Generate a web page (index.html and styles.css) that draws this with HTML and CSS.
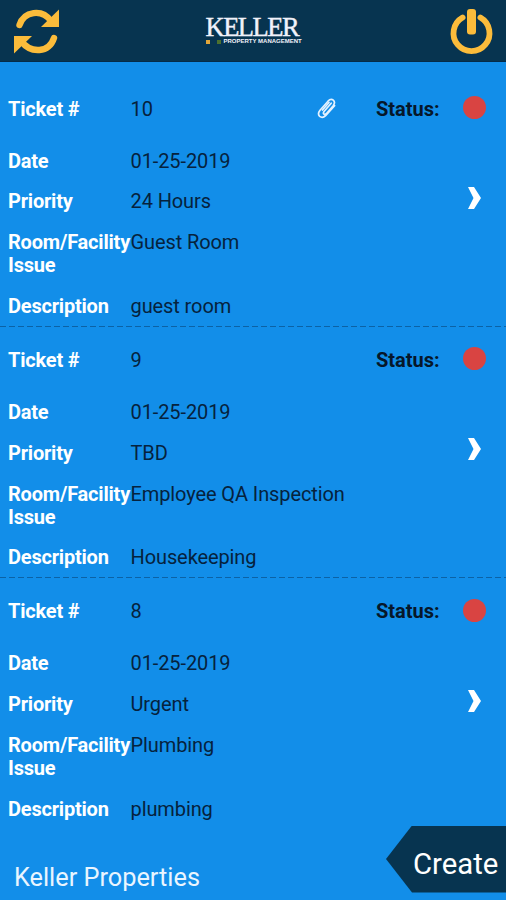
FILE: index.html
```html
<!DOCTYPE html>
<html lang="en">
<head>
<meta charset="utf-8">
<title>Keller Property Management</title>
<link rel="stylesheet" href="styles.css">
</head>
<body>
<header class="topbar">
  <svg class="refresh" width="48" height="46" viewBox="0 0 48 46" fill="none" stroke="#fbbc3b" stroke-width="6.400" stroke-linecap="round">
    <path d="M7.500 17C12 3 30 .5 39 13"/>
    <path d="M47 1.500V19H29Z" fill="#fbbc3b" stroke="none"/>
    <path d="M42 30C37 45 19 46 9 33"/>
    <path d="M2 45.500V28H20Z" fill="#fbbc3b" stroke="none"/>
  </svg>
  <div class="logo">
    <div class="logo-name">KELLER</div>
    <div class="logo-sub"><i class="sq gold"></i><i class="sq green"></i><span class="tagline">PROPERTY MANAGEMENT</span></div>
  </div>
  <svg class="power" width="46" height="48" viewBox="0 0 46 48" fill="none" stroke="#fbbc3b" stroke-linecap="round">
    <path d="M13.600 9.500A18 18 0 1 0 31.400 9.500" stroke-width="5.800"/>
    <rect x="18" y="1" width="9" height="25.500" rx="3" fill="#fbbc3b" stroke="none"/>
  </svg>
</header>
<main class="list">
  <section class="ticket">
    <dl class="fields">
      <dt class="first">Ticket #</dt><dd class="first">10</dd>
      <dt>Date</dt><dd>01-25-2019</dd>
      <dt>Priority</dt><dd>24 Hours</dd>
      <dt>Room/Facility<br>Issue</dt><dd>Guest Room</dd>
      <dt>Description</dt><dd>guest room</dd>
    </dl>
    <div class="side">
      <div class="status">
        <svg class="clip" width="22" height="24" viewBox="0 0 22 24" fill="none" stroke="#e4f2ff" stroke-width="1.700" stroke-linecap="round" stroke-linejoin="round"><path d="M15.200 7.200L8.200 15.200Q6.700 17.200 8 18.200Q9.300 19 10.700 17.300L17.200 9.800Q19.700 6.300 17.300 4.200Q14.800 2.200 12 5.200L4 14.200Q1.200 17.800 3.700 20.400Q6.600 22.600 9.600 19.600L18.600 9.600"/><path d="M13 6.500L6.500 14"/></svg>
        <span>Status:</span><i class="dot"></i>
      </div>
      <svg class="chevron" width="14" height="24" viewBox="0 0 14 24" fill="#fff"><path d="M0 1H6L13 12L6 23H0L5.500 12Z"/></svg>
    </div>
  </section>
  <section class="ticket">
    <dl class="fields">
      <dt class="first">Ticket #</dt><dd class="first">9</dd>
      <dt>Date</dt><dd>01-25-2019</dd>
      <dt>Priority</dt><dd>TBD</dd>
      <dt>Room/Facility<br>Issue</dt><dd>Employee QA Inspection</dd>
      <dt>Description</dt><dd>Housekeeping</dd>
    </dl>
    <div class="side">
      <div class="status"><span>Status:</span><i class="dot"></i></div>
      <svg class="chevron" width="14" height="24" viewBox="0 0 14 24" fill="#fff"><path d="M0 1H6L13 12L6 23H0L5.500 12Z"/></svg>
    </div>
  </section>
  <section class="ticket">
    <dl class="fields">
      <dt class="first">Ticket #</dt><dd class="first">8</dd>
      <dt>Date</dt><dd>01-25-2019</dd>
      <dt>Priority</dt><dd>Urgent</dd>
      <dt>Room/Facility<br>Issue</dt><dd>Plumbing</dd>
      <dt>Description</dt><dd>plumbing</dd>
    </dl>
    <div class="side">
      <div class="status"><span>Status:</span><i class="dot"></i></div>
      <svg class="chevron" width="14" height="24" viewBox="0 0 14 24" fill="#fff"><path d="M0 1H6L13 12L6 23H0L5.500 12Z"/></svg>
    </div>
  </section>
</main>
<footer class="footer">
  <div class="company">Keller Properties</div>
  <div class="create">Create</div>
</footer>
</body>
</html>
```
FILE: styles.css
```css
* { box-sizing: border-box; }
body {
  margin: 0;
  height: 900px;
  display: flex;
  flex-direction: column;
  overflow: hidden;
  background: #128ee9;
  font-family: Roboto, sans-serif;
  font-size: 20px;
  line-height: 23px;
}
.topbar {
  flex: none;
  height: 62px;
  display: flex;
  justify-content: space-between;
  align-items: flex-start;
  padding: 8px 11px 0 12px;
  background: #073450;
  border-bottom: 1px solid #052b49;
}
.logo { width: 98px; margin-top: 8px; color: #f1f2fa; }
.logo-name {
  font: 26.500px/23px "Liberation Serif", serif;
  height: 23px;
  letter-spacing: -1.500px;
  white-space: nowrap;
  -webkit-text-stroke: 0.4px #f1f2fa;
}
.logo-sub { display: flex; align-items: center; height: 5px; }
.sq { width: 4px; height: 4px; flex: none; }
.gold { background: #e1a63a; }
.green { background: #4c712f; margin-left: 7px; }
.tagline { margin-left: 3px; font: bold 6px/5px "Liberation Sans", sans-serif; white-space: nowrap; }
.list { flex: none; padding-top: 13px; }
.ticket {
  height: 251.200px;
  display: flex;
  justify-content: space-between;
  padding: 22.700px 20px 0 8px;
}
.ticket + .ticket {
  background: repeating-linear-gradient(90deg, #0c62a5 0 6px, transparent 6px 9px) top left / 100% 1px no-repeat;
}
.fields {
  flex: none;
  margin: 0;
  display: grid;
  grid-template-columns: 122.500px auto;
  align-content: start;
  row-gap: 17.900px;
}
dt { color: #fff; font-weight: 700; white-space: nowrap; letter-spacing: -0.200px; }
dd { margin: 0; color: #06223d; white-space: nowrap; letter-spacing: -0.100px; }
.first { margin-bottom: 11px; }
.side { display: flex; flex-direction: column; align-items: flex-end; }
.status { display: flex; align-items: center; height: 23px; font-weight: 700; color: #06172a; }
.status span { width: 63px; margin-right: 24px; }
.clip { margin-right: 38px; margin-top: -3px; }
.dot { width: 23px; height: 23px; border-radius: 50%; background: #d94442; margin-top: -3px; }
.chevron { margin-top: 65.500px; margin-right: 4px; }
.footer { flex: 1; display: flex; justify-content: space-between; min-height: 0; }
.company { padding: 34px 0 0 14px; font-size: 25.300px; line-height: 30px; color: #e9f5ff; }
.create {
  width: 120px;
  height: 67px;
  margin-top: -3px;
  padding: 22px 0 0 27px;
  background: #073450;
  clip-path: polygon(26px 0, 100% 0, 100% 100%, 26px 100%, 0 50%);
  color: #fff;
  font-size: 29.300px;
  line-height: 32px;
}
```
